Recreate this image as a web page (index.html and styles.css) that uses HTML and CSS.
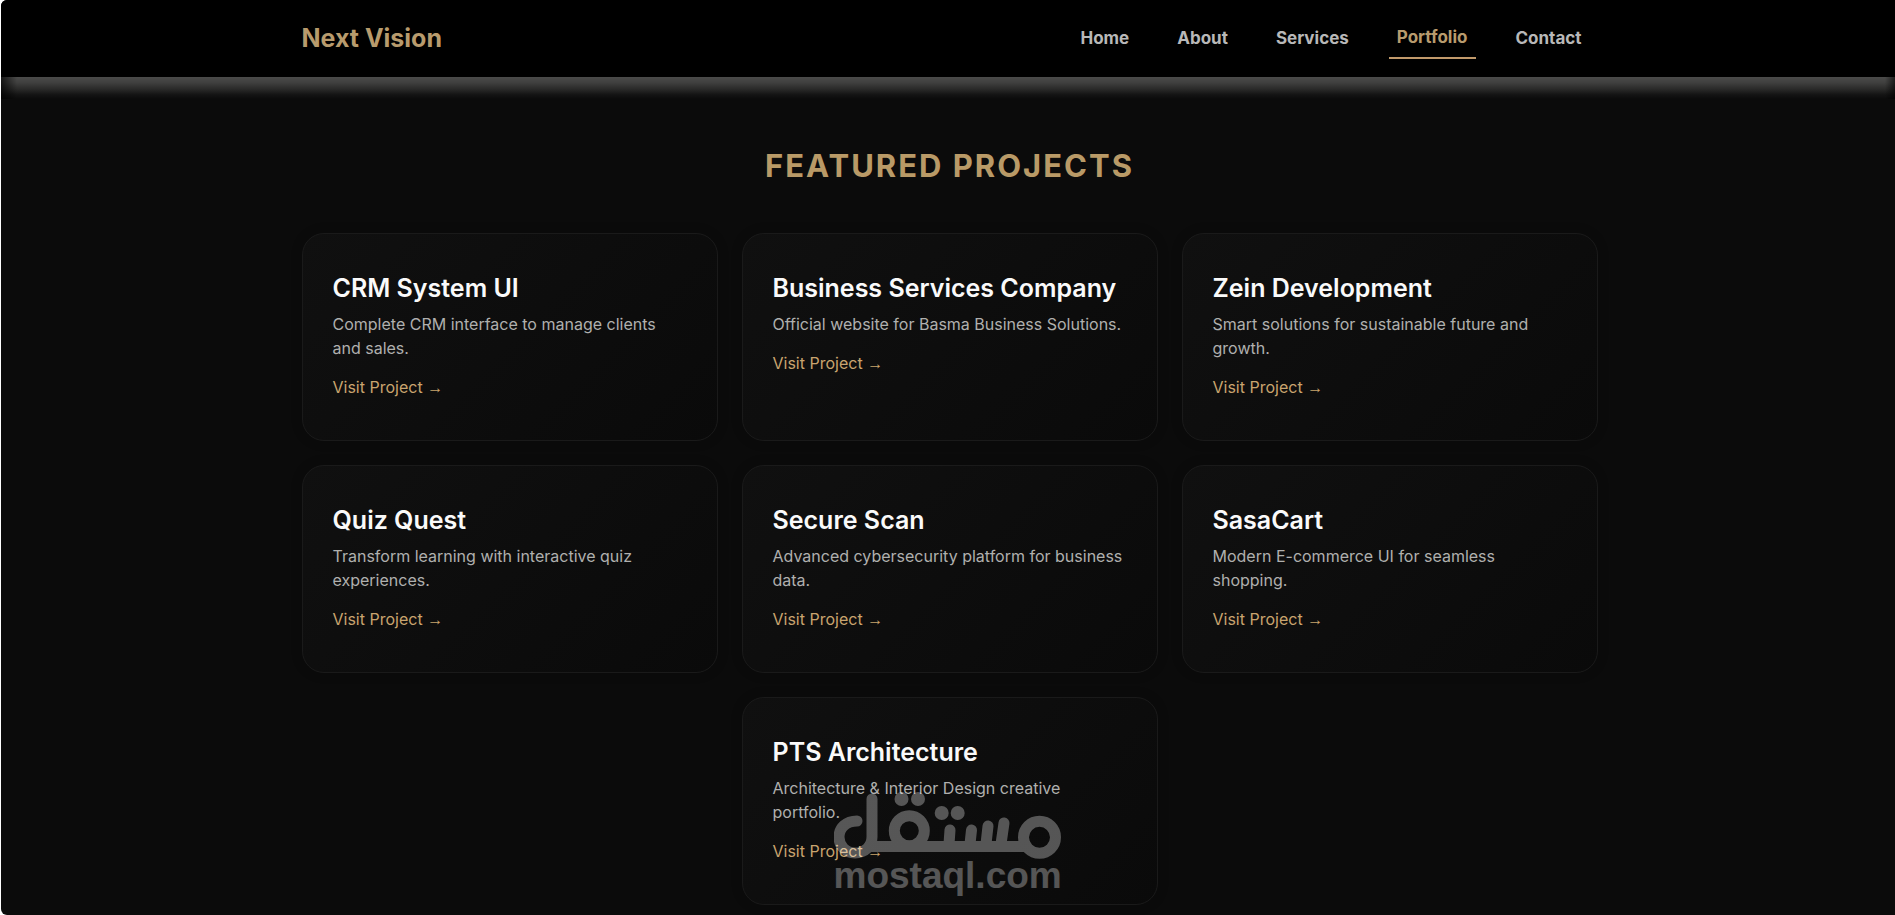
FILE: index.html
```html
<!DOCTYPE html>
<html lang="en">

<head>
    <meta charset="utf-8">
    <title>Next Vision | Portfolio</title>
    <meta name="viewport" content="width=device-width, initial-scale=1">
    <link rel="stylesheet" href="styles.css">
</head>

<body>
    <div class="page">
        <header class="header">
            <div class="container header-inner">
                <a class="logo" href="#">Next Vision</a>
                <nav class="nav">
                    <a href="#home">Home</a>
                    <a href="#about">About</a>
                    <a href="#services">Services</a>
                    <a class="active" href="#portfolio">Portfolio</a>
                    <a href="#contact">Contact</a>
                </nav>
            </div>
        </header>
        <div class="glow"></div>

        <main class="container" id="portfolio">
            <h1 class="section-title">FEATURED PROJECTS</h1>
            <div class="projects">
                <article class="card">
                    <h2>CRM System UI</h2>
                    <p>Complete CRM interface to manage clients and sales.</p>
                    <a href="#crm">Visit Project <span class="arrow">→</span></a>
                </article>
                <article class="card">
                    <h2>Business Services Company</h2>
                    <p>Official website for Basma Business Solutions.</p>
                    <a href="#basma">Visit Project <span class="arrow">→</span></a>
                </article>
                <article class="card">
                    <h2>Zein Development</h2>
                    <p>Smart solutions for sustainable future and growth.</p>
                    <a href="#zein">Visit Project <span class="arrow">→</span></a>
                </article>
                <article class="card">
                    <h2>Quiz Quest</h2>
                    <p>Transform learning with interactive quiz experiences.</p>
                    <a href="#quiz">Visit Project <span class="arrow">→</span></a>
                </article>
                <article class="card">
                    <h2>Secure Scan</h2>
                    <p>Advanced cybersecurity platform for business data.</p>
                    <a href="#scan">Visit Project <span class="arrow">→</span></a>
                </article>
                <article class="card">
                    <h2>SasaCart</h2>
                    <p>Modern E-commerce UI for seamless shopping.</p>
                    <a href="#sasacart">Visit Project <span class="arrow">→</span></a>
                </article>
                <article class="card">
                    <h2>PTS Architecture</h2>
                    <p>Architecture &amp; Interior Design creative portfolio.</p>
                    <a href="#pts">Visit Project <span class="arrow">→</span></a>
                    <div class="watermark">
                        <svg class="watermark-logo" viewBox="0 0 228 68" aria-hidden="true">
                            <g fill="none" stroke="#fff" stroke-width="11" stroke-linecap="round">
                                <path d="M23 29C12 29 5 36 5 45C5 54 12 61 21 61C31 61 38 54 38 45V7"/>
                                <path d="M36 54.500H196" stroke-linecap="butt"/>
                                <circle cx="75.300" cy="38.700" r="15"/>
                                <circle cx="205.500" cy="45.300" r="16"/>
                                <path d="M115 52L116 38M136 52L137.500 38M152 52L154 34M167 52L170 31"/>
                            </g>
                            <g fill="#fff">
                                <circle cx="67.500" cy="7" r="7"/>
                                <circle cx="84" cy="7" r="7"/>
                                <circle cx="107.700" cy="21" r="7"/>
                                <circle cx="123.700" cy="21" r="7"/>
                            </g>
                        </svg>
                        <span>mostaql.com</span>
                    </div>
                </article>
            </div>
        </main>
    </div>
</body>

</html>
```
FILE: styles.css
```css
* {
    box-sizing: border-box;
}

body {
    margin: 0;
    background-color: #fff;
    font-family: Inter, "Open Sans", sans-serif;
    font-size: 16px;
    line-height: 24px;
    overflow: hidden;
}

a {
    text-decoration: none;
}

.page {
    min-height: 100vh;
    margin-left: 1px;
    background-color: #0b0b0b;
    border-radius: 6px 0 0 6px;
    overflow: hidden;
}

.container {
    max-width: 1299px;
    margin: 0 auto;
    padding-left: 3px;
}

.header {
    background-color: #000;
}

.header-inner {
    display: flex;
    justify-content: space-between;
    align-items: center;
    height: 77px;
    padding-bottom: 2px;
}

.logo {
    color: #b89b6d;
    font-size: 25px;
    font-weight: 700;
}

.nav {
    display: flex;
    align-items: center;
    gap: 32px;
    padding-right: 8px;
}

.nav a {
    padding: 8px;
    color: #b8b8b8;
    font-size: 17px;
    font-weight: 700;
}

.nav a.active {
    color: #b89b6d;
    border-bottom: 2px solid #c19a6b;
}

/* light strip under the header */
.glow {
    height: 22px;
    background:
        linear-gradient(90deg, rgba(0, 0, 0, 0.7), transparent 16px, transparent calc(100% - 10px), rgba(0, 0, 0, 0.6)),
        linear-gradient(#4b4b4a, #40403f 25%, #2a2a29 55%, #141414 80%, #0b0b0b);
}

.section-title {
    margin: 0;
    padding: 43px 0;
    color: #b99a67;
    font-size: 31px;
    font-weight: 700;
    line-height: 48px;
    letter-spacing: 2px;
    text-align: center;
}

.projects {
    display: grid;
    grid-template-columns: repeat(3, 1fr);
    gap: 24px;
}

.card {
    position: relative;
    padding: 40px 30px;
    border: 1px solid #1a1a1a;
    border-radius: 22px;
    background: linear-gradient(135deg, #101010, #0a0a0a);
    box-shadow: 0 0 12px rgba(0, 0, 0, 0.2);
}

.card:last-child {
    grid-column: 2;
}

.card h2 {
    margin: 0 0 10px;
    color: #fafafa;
    font-size: 25px;
    font-weight: 600;
    line-height: 28px;
}

.card p {
    margin: 0 0 15px;
    color: #b0b0ae;
}

.card a {
    display: block;
    color: #c9a46e;
}

.arrow {
    font-family: "Liberation Sans", sans-serif;
}

/* translucent stamp laid over the last card */
.watermark {
    position: absolute;
    top: 94px;
    left: 91px;
    width: 228px;
    color: #fff;
    font-family: "Liberation Sans", sans-serif;
    font-size: 37px;
    font-weight: 700;
    line-height: 32px;
    opacity: 0.3;
    pointer-events: none;
}

.watermark-logo {
    display: block;
    width: 100%;
}
```
